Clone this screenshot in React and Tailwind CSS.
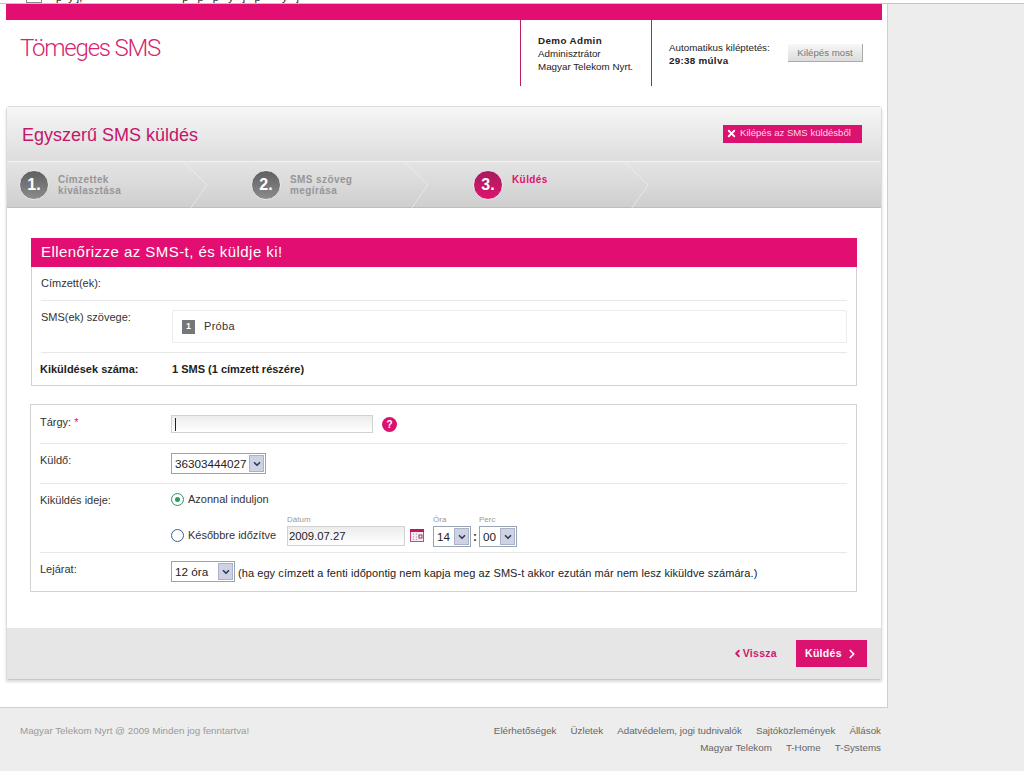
import React from 'react';
import { ChevronDown, ChevronLeft, ChevronRight, X } from 'lucide-react';

const StepArrow = ({ className }) => (
  <svg width="26" height="47" viewBox="0 0 26 47" className={className} fill="none">
    <path d="M1 0 L24 23 L7 47" stroke="#f0f0f0" strokeOpacity="0.7" strokeWidth="1" />
  </svg>
);

const Step = ({ num, lines, active, className, arrowClass }) => (
  <div className={`flex h-[47px] shrink-0 items-center pl-[12px] ${className}`}>
    <div className={`-mt-[2px] flex h-[30px] w-[30px] shrink-0 items-center justify-center rounded-full border border-[#e8e8e8] text-[16px] font-bold text-white ${active ? 'bg-gradient-to-b from-[#a81a5e] to-[#e0126f]' : 'bg-gradient-to-b from-[#606060] to-[#8c8c8c]'}`}>
      {num}.
    </div>
    <div className={`ml-[9px] self-start pt-[12px] text-[10px] font-bold leading-[11px] tracking-[0.4px] ${active ? 'text-[#e0126f]' : 'text-[#969696]'}`}>
      {lines.map((l) => <div key={l}>{l}</div>)}
    </div>
    <StepArrow className={arrowClass} />
  </div>
);

const FakeSelect = ({ value, className }) => (
  <div className={`flex items-center justify-between border border-[#98a3b3] bg-white pl-[3px] pr-px text-[11.7px] text-[#222] ${className}`}>
    <span>{value}</span>
    <span className="flex h-[17px] w-[15px] items-center justify-center border border-[#a9b2c8] bg-[#cfd2e3]">
      <ChevronDown size={10} strokeWidth={4} color="#2f3b5c" />
    </span>
  </div>
);

const Radio = ({ checked }) => (
  <span className={`flex h-[13px] w-[13px] shrink-0 items-center justify-center rounded-full border ${checked ? 'border-[#3b8a68]' : 'border-[#3b5f8c]'} bg-white`}>
    {checked && <span className="h-[5px] w-[5px] rounded-full bg-[#2f9a63]" />}
  </span>
);

const CalendarIcon = () => (
  <svg width="14" height="13" viewBox="0 0 14 13" fill="none">
    <rect x="0.5" y="0.5" width="13" height="12" fill="#f7e9ef" stroke="#c9487f" />
    <rect x="0" y="0" width="14" height="3" fill="#c2185b" />
    <path d="M3 5h1M6 5h1M3 8h1M6 8h1M3 10.5h1M6 10.5h1" stroke="#9aa0ad" />
    <rect x="9" y="6" width="3" height="3" fill="none" stroke="#8a3f60" />
  </svg>
);

const SmallLabel = ({ children }) => (
  <div className="text-[8px] leading-[10px] text-[#999]">{children}</div>
);

export default function App() {
  return (
    <div className="relative flex h-[771px] w-[1024px] flex-col overflow-hidden bg-[#ededed] font-['Liberation_Sans',Arial,sans-serif]">
      {/* top sliver of the previous page part */}
      <div className="flex h-1 shrink-0 border-b border-[#c4c4c4] bg-white">
        <div className="h-[4px] w-[887px] overflow-hidden pl-[26px]">
          <div className="-mt-[9px] flex items-start whitespace-pre text-[11px] leading-[12px] text-[#222]">
            <span className="mr-[14px] h-[12px] w-[16px] border border-[#888]" />
            <span>p  y j,</span>
            <span className="ml-[100px]">p   p   p   y   j   p       y   j</span>
          </div>
        </div>
      </div>

      <div className="flex h-[704px] w-[888px] shrink-0 flex-col border-r border-b border-[#cfcfcf] bg-white pl-[6px] pr-[5px]">
        <div className="h-4 shrink-0 bg-[#e20e72]" />

        {/* header */}
        <div className="flex h-[86px] shrink-0 items-start">
          <div className="w-[514px] pl-[14px] pt-[11px] font-['Roboto',sans-serif] text-[24px] font-light leading-[34px] tracking-[-1.2px] text-[#d8246e]">Tömeges SMS</div>
          <div className="h-[66px] w-[132px] border-x border-[#b8215f] pl-[17px] pt-[14px] text-[9.8px] leading-[13px] text-[#222]">
            <div className="font-bold tracking-[0.4px]">Demo Admin</div>
            <div>Adminisztrátor</div>
            <div>Magyar Telekom Nyrt.</div>
          </div>
          <div className="flex items-start pl-[17px] pt-[21px] text-[9.8px] leading-[13px] text-[#222]">
            <div className="w-[119px]">
              <div>Automatikus kiléptetés:</div>
              <div className="font-bold tracking-[0.3px]">29:38 múlva</div>
            </div>
            <div className="mt-[3px] flex h-[18px] w-[75px] items-center justify-center border-r border-b border-[#aaa] bg-gradient-to-b from-[#f8f8f8] to-[#dcdcdc] text-[9.7px] text-[#777]">Kilépés most</div>
          </div>
        </div>

        {/* main panel */}
        <div className="flex h-[574px] shrink-0 flex-col rounded-t-[4px] border-t border-x border-[#dcdcdc] shadow-[0_2px_3px_rgba(0,0,0,0.15)]">
          <div className="flex h-[54px] shrink-0 items-center justify-between bg-gradient-to-b from-[#f6f6f6] to-[#dddddd] pl-[15px] pr-[19px]">
            <div className="pt-[2px] text-[18px] text-[#c5146a]">Egyszerű SMS küldés</div>
            <div className="-mt-[1px] flex h-[18px] w-[139px] items-center gap-[3px] bg-[#dc1270] pl-[3px] text-[9.6px] text-[#f8d8e6]">
              <X size={11} strokeWidth={4} color="#ffffff" />
              Kilépés az SMS küldésből
            </div>
          </div>
          <div className="flex h-[47px] shrink-0 border-t border-[#f2f2f2] border-b-[#bdbdbd] border-b bg-gradient-to-b from-[#e4e4e4] to-[#cfcfcf]">
            <Step num="1" lines={['Címzettek', 'kiválasztása']} className="w-[232px]" arrowClass="ml-auto mr-[30px]" />
            <Step num="2" lines={['SMS szöveg', 'megírása']} className="w-[222px]" arrowClass="ml-auto mr-[31px]" />
            <Step num="3" lines={['Küldés']} active className="w-[215px]" arrowClass="ml-auto mr-[26px]" />
          </div>

          <div className="flex min-h-0 flex-1 flex-col bg-white px-[24px] pt-[30px]">
            {/* summary box */}
            <div className="w-[826px] border-x border-b border-[#d2d2d2]">
              <div className="-mx-px flex h-[29px] items-center bg-[#e20e72] pl-[10px] text-[15px] tracking-[0.45px] text-white">Ellenőrizze az SMS-t, és küldje ki!</div>
              <div className="mx-[9px] flex h-[34px] items-center border-b border-[#e8e8e8] text-[11px] text-[#333]">Címzett(ek):</div>
              <div className="mx-[9px] flex h-[52px] items-start border-b border-[#e8e8e8] text-[11px] text-[#333]">
                <div className="w-[131px] pt-[8px]">SMS(ek) szövege:</div>
                <div className="mt-[9px] flex h-[33px] w-[675px] items-center rounded-[2px] border border-[#ececec] pl-[9px]">
                  <span className="flex h-[14px] w-[13px] items-center justify-center bg-[#777] text-[9px] font-bold text-white">1</span>
                  <span className="ml-[9px] tracking-[0.3px]">Próba</span>
                </div>
              </div>
              <div className="mx-[9px] flex h-[32px] items-center text-[11px] font-bold text-[#222]">
                <div className="-ml-px w-[132px]">Kiküldések száma:</div>
                <div>1 SMS (1 címzett részére)</div>
              </div>
            </div>

            {/* form box */}
            <div className="-ml-px mt-[18px] w-[827px] border border-[#d2d2d2] text-[11px] text-[#333]">
              <div className="mx-[9px] flex h-[39px] items-start border-b border-[#e8e8e8] pt-[10px]">
                <div className="-mt-px w-[131px]">Tárgy: <span className="text-[#e20e72]">*</span></div>
                <div className="flex h-[18px] w-[202px] items-center border border-[#d2d2d2] bg-gradient-to-b from-[#ececec] to-white pl-[3px]">
                  <span className="h-[13px] w-px bg-[#222]" />
                </div>
                <div className="ml-[9px] mt-[2px] flex h-[15px] w-[15px] items-center justify-center rounded-full bg-[#dc1270] text-[10px] font-bold text-white">?</div>
              </div>
              <div className="mx-[9px] flex h-[40px] items-start border-b border-[#e8e8e8] pt-[9px]">
                <div className="-mt-px w-[131px]">Küldő:</div>
                <FakeSelect value="36303444027" className="h-[21px] w-[95px]" />
              </div>
              <div className="mx-[9px] flex h-[69px] items-start border-b border-[#e8e8e8]">
                <div className="w-[131px] pt-[8px]">Kiküldés ideje:</div>
                <div className="flex flex-col">
                  <div className="mb-px flex h-[30px] items-center gap-[4px]">
                    <Radio checked />
                    Azonnal induljon
                  </div>
                  <div className="flex items-start">
                    <div className="mt-[12px] flex w-[116px] items-center gap-[4px]">
                      <Radio />
                      Későbbre időzítve
                    </div>
                    <div className="w-[123px]">
                      <SmallLabel>Dátum</SmallLabel>
                      <div className="mt-[1px] flex h-[20px] w-[118px] items-center border border-[#d2d2d2] bg-gradient-to-b from-[#ececec] to-white pl-px text-[11.3px] text-[#222]">2009.07.27</div>
                    </div>
                    <div className="mt-[14px] w-[23px]"><CalendarIcon /></div>
                    <div>
                      <SmallLabel>Óra</SmallLabel>
                      <FakeSelect value="14" className="mt-[1px] h-[21px] w-[38px]" />
                    </div>
                    <div className="mt-[13px] w-[8px] text-center text-[12px] font-bold">:</div>
                    <div>
                      <SmallLabel>Perc</SmallLabel>
                      <FakeSelect value="00" className="mt-[1px] h-[21px] w-[38px]" />
                    </div>
                  </div>
                </div>
              </div>
              <div className="mx-[9px] flex h-[38px] items-start pt-[8px]">
                <div className="w-[131px]">Lejárat:</div>
                <FakeSelect value="12 óra" className="h-[21px] w-[64px]" />
                <div className="ml-[3px] whitespace-nowrap pt-[4px] text-[11px] tracking-[0.07px] text-[#222]">(ha egy címzett a fenti időpontig nem kapja meg az SMS-t akkor ezután már nem lesz kiküldve számára.)</div>
              </div>
            </div>
          </div>

          <div className="flex h-[52px] shrink-0 items-center justify-end rounded-b-[2px] border-b border-[#c8c8c8] bg-[#e6e6e6] pr-[14px]">
            <div className="flex items-center text-[10.5px] font-bold tracking-[0.3px] text-[#cf1a6b]">
              <ChevronLeft size={11} strokeWidth={4} />
              Vissza
            </div>
            <div className="ml-[19px] flex h-[27px] w-[71px] items-center justify-between bg-[#dc1270] pl-[9px] pr-[8px] text-[10.5px] font-bold tracking-[0.3px] text-white">
              Küldés
              <ChevronRight size={14} strokeWidth={3} />
            </div>
          </div>
        </div>
      </div>

      {/* footer */}
      <div className="flex w-[887px] flex-1 items-start justify-between pl-[20px] pr-[6px] pt-[14px] text-[9.8px] leading-[17px]">
        <div className="text-[#9a9a9a]">Magyar Telekom Nyrt @ 2009 Minden jog fenntartva!</div>
        <div className="flex flex-col items-end text-[#666]">
          <div className="flex gap-[14px]">
            <span>Elérhetőségek</span>
            <span>Üzletek</span>
            <span>Adatvédelem, jogi tudnivalók</span>
            <span>Sajtóközlemények</span>
            <span>Állások</span>
          </div>
          <div className="flex gap-[14px]">
            <span>Magyar Telekom</span>
            <span>T-Home</span>
            <span>T-Systems</span>
          </div>
        </div>
      </div>
    </div>
  );
}
